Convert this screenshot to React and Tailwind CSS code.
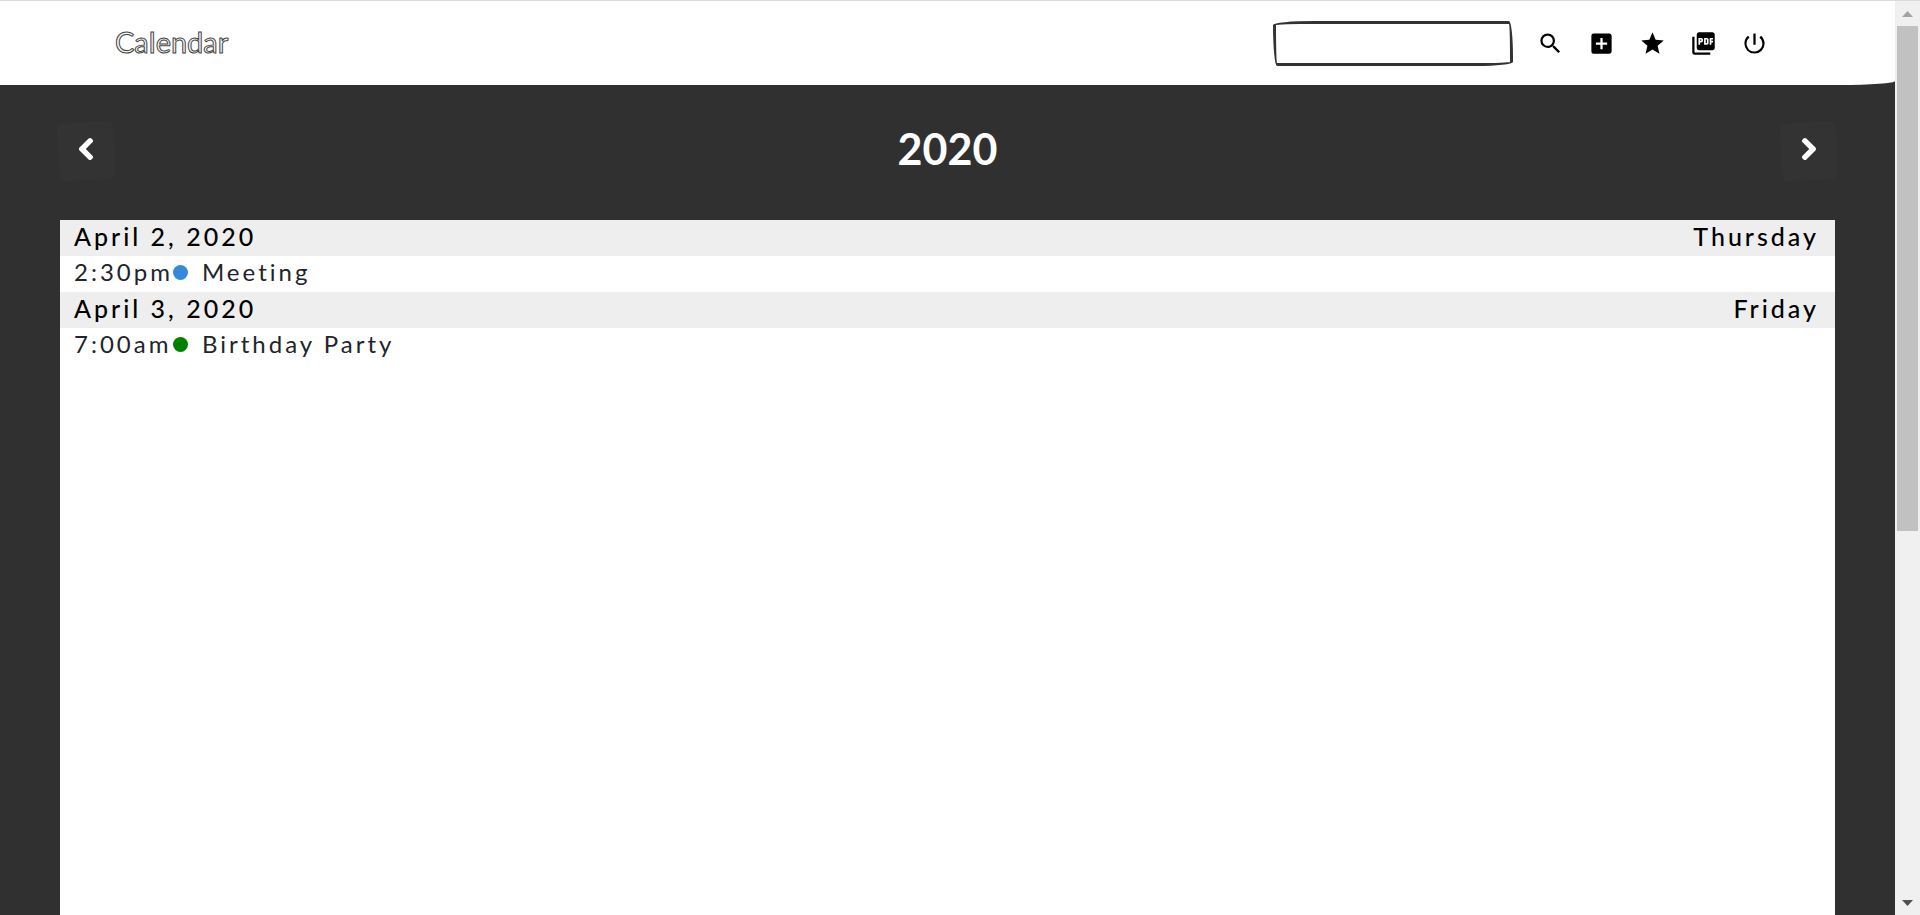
import { Fragment } from "react";
import {
  MdSearch,
  MdAddBox,
  MdStar,
  MdPictureAsPdf,
  MdPowerSettingsNew,
} from "react-icons/md";
import { FaChevronLeft, FaChevronRight } from "react-icons/fa";

const actions = [
  { label: "Search", Icon: MdSearch },
  { label: "Add event", Icon: MdAddBox },
  { label: "Favorites", Icon: MdStar },
  { label: "Export PDF", Icon: MdPictureAsPdf },
  { label: "Log out", Icon: MdPowerSettingsNew },
];

const days = [
  {
    date: "April 2, 2020",
    weekday: "Thursday",
    events: [{ time: "2:30pm", title: "Meeting", dot: "bg-[#3788d8]" }],
  },
  {
    date: "April 3, 2020",
    weekday: "Friday",
    events: [{ time: "7:00am", title: "Birthday Party", dot: "bg-[#008000]" }],
  },
];

function Header() {
  return (
    <header className="flex h-[84px] items-center justify-between rounded-br-[55px_4px] bg-white px-[115px]">
      <a
        href="#"
        className="pb-0.5 text-[29px] leading-9 font-normal text-[#f4f4f4] [-webkit-text-stroke:1px_#444]"
      >
        Calendar
      </a>
      <form className="flex items-center gap-3" onSubmit={(e) => e.preventDefault()}>
        <input
          type="text"
          aria-label="Search events"
          className="h-[45px] w-[240px] rounded-[255px_25px_225px_25px/25px_225px_25px_255px] border-[3px] border-[#333] bg-white px-4 text-xl outline-none"
        />
        <div className="flex">
          {actions.map(({ label, Icon }) => (
            <button
              key={label}
              type="button"
              aria-label={label}
              className="flex h-12 w-[51px] items-center justify-center text-black"
            >
              <Icon size={27} />
            </button>
          ))}
        </div>
      </form>
    </header>
  );
}

function StepButton({ label, children }) {
  return (
    <button
      type="button"
      aria-label={label}
      className="flex h-[60px] w-[58px] items-center justify-center rounded-[255px_25px_225px_25px/25px_225px_25px_255px] bg-[#333] pb-1 text-white"
    >
      {children}
    </button>
  );
}

function Agenda() {
  return (
    <table className="w-full border-collapse leading-8 tracking-[3px]">
      <tbody>
        {days.map((day) => (
          <Fragment key={day.date}>
            <tr className="bg-[#eee] text-[25px] text-black">
              <th colSpan={3} scope="rowgroup" className="p-0 pb-1 font-medium">
                <div className="flex justify-between pr-4 pl-3.5">
                  <span>{day.date}</span>
                  <span>{day.weekday}</span>
                </div>
              </th>
            </tr>
            {day.events.map((event) => (
              <tr key={event.title} className="text-2xl/8 tracking-[3px] text-[#212529]">
                <td className="w-[112px] p-0 pb-1 pl-3.5 whitespace-nowrap">{event.time}</td>
                <td className="w-[29px] p-0 pb-1">
                  <span className={`block size-[15px] rounded-full ${event.dot}`} />
                </td>
                <td className="p-0 pb-1">{event.title}</td>
              </tr>
            ))}
          </Fragment>
        ))}
      </tbody>
    </table>
  );
}

function ScrollRail() {
  return (
    <div aria-hidden="true" className="flex w-[25px] flex-col items-center bg-[#f0f0f0]">
      <svg className="h-[25px] w-[11px] shrink-0" viewBox="0 0 11 25">
        <path d="M0 16h11L5.5 10z" fill="#a3a3a3" />
      </svg>
      <div className="flex w-[21px] flex-1 flex-col">
        <div className="h-[58.5%] bg-[#c1c1c1]" />
      </div>
      <svg className="h-[25px] w-[11px] shrink-0" viewBox="0 0 11 25">
        <path d="M0 10h11L5.5 16z" fill="#505050" />
      </svg>
    </div>
  );
}

export default function App() {
  return (
    <div className="flex h-screen border-t border-[#dcdcdc] bg-[#303030] font-['Lato','Open_Sans',sans-serif]">
      <div className="flex min-w-0 flex-1 flex-col">
        <Header />
        <main className="flex flex-1 flex-col pt-9">
          <div className="flex items-center justify-between px-[57px]">
            <StepButton label="Previous year">
              <FaChevronLeft size={24} stroke="currentColor" strokeWidth={36} strokeLinejoin="round" overflow="visible" />
            </StepButton>
            <h1 className="pb-1 text-[43px] leading-[56px] font-bold text-white">2020</h1>
            <StepButton label="Next year">
              <FaChevronRight size={24} stroke="currentColor" strokeWidth={36} strokeLinejoin="round" overflow="visible" />
            </StepButton>
          </div>
          <section aria-label="Agenda" className="mx-[60px] mt-[39px] flex-1 bg-white">
            <Agenda />
          </section>
        </main>
      </div>
      <ScrollRail />
    </div>
  );
}
